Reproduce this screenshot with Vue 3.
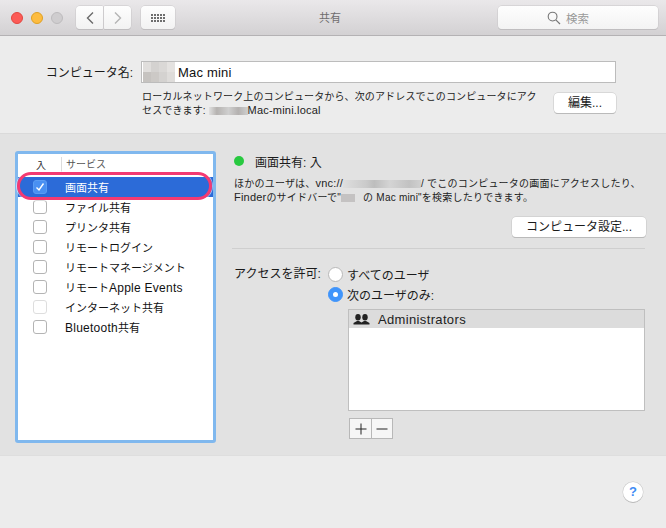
<script setup>
const runs = (name) =>
  name.split(/([A-Za-z ]+)/).filter(Boolean).map((text) => ({ text, latin: /^[A-Za-z ]/.test(text) }))
const services = [
  { name: '画面共有', on: true, selected: true },
  { name: 'ファイル共有' },
  { name: 'プリンタ共有' },
  { name: 'リモートログイン' },
  { name: 'リモートマネージメント' },
  { name: 'リモートApple Events' },
  { name: 'インターネット共有', dim: true },
  { name: 'Bluetooth共有' }
].map((s) => ({ ...s, runs: runs(s.name) }))
const nameBlur = ['#e0dedc', '#d4d2d0', '#dad8d6', '#e4e2e0', '#c6c3c0', '#ccc9c6', '#d4d2d0', '#dedcda']
const dots = Array.from({ length: 15 })
</script>

<template>
  <div class="window">
    <header class="titlebar">
      <div class="lights">
        <span class="light red"></span>
        <span class="light yellow"></span>
        <span class="light gray"></span>
      </div>
      <div class="navs">
        <button class="tool back" type="button">
          <svg width="10" height="14" viewBox="0 0 10 14"><path d="M8 1.5 2.5 7 8 12.5" fill="none" stroke="#6a6a6a" stroke-width="1.4" /></svg>
        </button>
        <button class="tool fwd" type="button">
          <svg width="10" height="14" viewBox="0 0 10 14"><path d="M2 1.5 7.5 7 2 12.5" fill="none" stroke="#b4b4b4" stroke-width="1.4" /></svg>
        </button>
      </div>
      <button class="tool grid" type="button">
        <span class="dots"><i v-for="(d, i) in dots" :key="i"></i></span>
      </button>
      <div class="title">共有</div>
      <div class="search">
        <svg width="14" height="14" viewBox="0 0 14 14"><circle cx="5.6" cy="5.6" r="4.4" fill="none" stroke="#777" stroke-width="1.1" /><path d="M8.8 8.8 13 13" stroke="#777" stroke-width="1.2" /></svg>
        <span>検索</span>
      </div>
    </header>

    <section class="top">
      <div class="name-row">
        <label class="name-label">コンピュータ名:</label>
        <div class="name-field">
          <span class="mosaic name-mosaic"><i v-for="(c, i) in nameBlur" :key="i" :style="{ background: c }"></i></span>
          <span>Mac mini</span>
        </div>
      </div>
      <div class="addr-row">
        <p class="addr">ローカルネットワーク上のコンピュータから、次のアドレスでこのコンピュータにアク<br />セスできます: <span class="smudge s-local"></span><span class="wide">Mac-mini.local</span></p>
        <button class="btn edit" type="button">編集...</button>
      </div>
    </section>

    <section class="middle">
      <div class="list">
        <div class="list-head">
          <span class="col-in">入</span>
          <span class="col-svc">サービス</span>
        </div>
        <div
          v-for="s in services"
          :key="s.name"
          class="row"
          :class="{ selected: s.selected }"
        >
          <span class="check" :class="{ on: s.on, dim: s.dim }">
            <svg v-if="s.on" width="10" height="10" viewBox="0 0 10 10"><path d="M1.5 5.5 4 8 8.5 1.5" fill="none" stroke="#fff" stroke-width="1.4" /></svg>
          </span>
          <span class="svc"><span v-for="(r, i) in s.runs" :key="i" :class="{ latin: r.latin }">{{ r.text }}</span></span>
        </div>
        <div class="ring"></div>
      </div>

      <div class="detail">
        <div class="status">
          <span class="led"></span>
          <span>画面共有: 入</span>
        </div>
        <p class="desc">ほかのユーザは、<span class="wide">vnc://</span><span class="smudge s-ip"></span>/ でこのコンピュータの画面にアクセスしたり、<br /><span class="wide">Finder</span>のサイドバーで"<span class="smudge s-nm"></span> の Mac mini"を検索したりできます。</p>
        <div class="settings-row">
          <button class="btn settings" type="button">コンピュータ設定...</button>
        </div>
        <hr class="rule" />
        <div class="access">
          <span class="access-label">アクセスを許可:</span>
          <div class="radios">
            <div class="radio-row"><span class="radio"></span><span>すべてのユーザ</span></div>
            <div class="radio-row"><span class="radio on"></span><span>次のユーザのみ:</span></div>
          </div>
        </div>
        <div class="users">
          <div class="users-box">
            <div class="user-row">
              <svg width="17" height="11" viewBox="0 0 17 11"><g fill="#222"><ellipse cx="5" cy="3.200" rx="2.700" ry="3.200" /><ellipse cx="12" cy="3.200" rx="2.700" ry="3.200" /><path d="M.5 10.500V9L4 7h2l2.500 1.500L11 7h2l3.500 2v1.500Z" /></g></svg>
              <span>Administrators</span>
            </div>
          </div>
          <div class="plusminus">
            <button class="pm" type="button"><svg width="12" height="12" viewBox="0 0 12 12"><path d="M6 .5v11M.5 6h11" stroke="#222" stroke-width="1" /></svg></button>
            <button class="pm" type="button"><svg width="12" height="12" viewBox="0 0 12 12"><path d="M.5 6h11" stroke="#222" stroke-width="1" /></svg></button>
          </div>
        </div>
      </div>
    </section>

    <footer class="bottom">
      <button class="help" type="button">?</button>
    </footer>
  </div>
</template>

<style>
html, body { margin: 0; background: #ececec; }
</style>

<style scoped>
.window {
  width: 666px;
  height: 528px;
  display: flex;
  flex-direction: column;
  overflow: hidden;
  background: #ececec;
  color: #1a1a1a;
  font-family: "Liberation Sans", "Noto Sans CJK JP", sans-serif;
  font-size: 11px;
}
button { font-family: inherit; padding: 0; margin: 0; cursor: default; }
p { margin: 0; }

.titlebar {
  height: 35px;
  flex: none;
  display: flex;
  align-items: center;
  padding: 0 8px 0 11px;
  box-sizing: content-box;
  background: linear-gradient(#eae8ea, #d3d1d3);
  border-bottom: 1px solid #b4b2b4;
  position: relative;
}
.lights { display: flex; gap: 8px; }
.light { width: 12px; height: 12px; border-radius: 50%; box-sizing: border-box; }
.red { background: #fc5b57; border: 1px solid #e2463f; }
.yellow { background: #fdbc40; border: 1px solid #dfa023; }
.gray { background: #cfcdcf; border: 1px solid #bdbbbd; }
.navs { display: flex; gap: 1px; margin-left: 13px; }
.tool {
  height: 23px;
  display: flex;
  align-items: center;
  justify-content: center;
  border: none;
  background: linear-gradient(#fefefe, #f2f2f2);
  box-shadow: 0 0 0 .5px #c8c6c8, 0 1px 0 #b8b6b8;
  border-radius: 4px;
}
.back, .fwd { width: 27px; }
.back { border-radius: 4px 1px 1px 4px; }
.fwd { border-radius: 1px 4px 4px 1px; }
.grid { width: 34px; margin-left: 10px; }
.dots { display: grid; grid-template-columns: repeat(5, 2px); gap: 1px; grid-auto-rows: 2px; }
.dots i { background: #6e6e6e; }
.title {
  position: absolute;
  left: 319px;
  top: 10px;
  font-size: 11px;
  line-height: 16px;
  color: #6f6d6f;
}
.search {
  margin-left: auto;
  width: 160px;
  height: 23px;
  display: flex;
  align-items: center;
  justify-content: center;
  gap: 5px;
  box-sizing: border-box;
  padding-right: 20px;
  font-size: 11.500px;
  color: #9a9a9a;
  border-radius: 4px;
  background: linear-gradient(#fefefe, #f3f3f3);
  box-shadow: 0 0 0 .5px #c8c6c8, 0 1px 0 #b8b6b8;
}

.top {
  flex: none;
  height: 97px;
  box-sizing: border-box;
  padding: 25px 50px 0 0;
}
.name-row { display: flex; align-items: center; }
.name-label { width: 133px; text-align: right; font-size: 12px; line-height: 22px; margin-right: 8px; position: relative; top: 1px; }
.name-field {
  width: 475px;
  height: 22px;
  box-sizing: border-box;
  border: 1px solid #bcbcbc;
  background: #fff;
  display: flex;
  align-items: center;
  font-size: 13px;
  letter-spacing: .2px;
  color: #111;
}
.mosaic { display: grid; }
.name-mosaic {
  grid-template-columns: repeat(4, 8px);
  grid-auto-rows: 10px;
  width: 32px;
  margin: 0 3px 0 1px;
}
.addr-row { display: flex; margin-top: 7px; }
.addr {
  margin-left: 142px;
  width: 412px;
  font-size: 10px;
  line-height: 14px;
  letter-spacing: .13px;
  white-space: nowrap;
  color: #222;
}
.wide { font-size: 11px; line-height: 10px; letter-spacing: .2px; }
.smudge { display: inline-block; height: 8px; vertical-align: -1px; }
.s-local { width: 39px; background: linear-gradient(90deg, #e0e0e0, #b5b2b0 20%, #cfcfcf 50%, #b4b1b0 75%, #cfcfcf); }
.btn {
  height: 20px;
  box-sizing: border-box;
  border: none;
  border-radius: 4px;
  background: #fff;
  box-shadow: 0 0 0 .5px #c4c4c4, 0 1px 0 #b0b0b0;
  font-size: 12px;
  line-height: 20px;
  color: #1a1a1a;
}
.edit { width: 62px; margin-top: 3px; }

.middle {
  flex: none;
  height: 323px;
  box-sizing: border-box;
  background: #e2e2e2;
  border-top: 1px solid #dadada;
  border-bottom: 1px solid #dedede;
  padding: 17px 20px 0 15px;
  display: flex;
}
.list {
  width: 201px;
  height: 292px;
  box-sizing: border-box;
  border: 3px solid #80b8ee;
  border-radius: 3px;
  background: #fff;
  position: relative;
}
.list-head {
  height: 20px;
  display: flex;
  align-items: center;
  font-size: 10px;
  color: #555;
}
.col-in { width: 43px; padding-left: 18px; box-sizing: border-box; color: #333; }
.col-svc { border-left: 1px solid #dcdcdc; padding-left: 4px; line-height: 15px; }
.row {
  height: 20px;
  display: flex;
  align-items: center;
  font-size: 11px;
  color: #111;
}
.list-head + .row { margin-top: 3px; }
.selected { background: #2c6bd8; color: #fff; }
.check {
  width: 14px;
  height: 14px;
  margin-left: 15px;
  box-sizing: border-box;
  border: 1px solid #b4b4b4;
  border-radius: 3px;
  background: #fff;
  display: flex;
  align-items: center;
  justify-content: center;
}
.check.on { background: #4a90f2; border-color: #5a9cf4; }
.check.dim { border-color: #dedede; }
.svc { margin-left: 18px; white-space: nowrap; }
.latin { font-size: 12px; letter-spacing: .25px; }
.ring {
  position: absolute;
  left: -1px;
  top: 18px;
  width: 195px;
  height: 28px;
  box-sizing: border-box;
  border: 3px solid #f43a72;
  border-radius: 14px;
  box-shadow: 0 0 0 1px rgba(255, 255, 255, .55);
}

.detail { margin-left: 16px; width: 413px; font-size: 11px; }
.status { display: flex; align-items: center; height: 20px; margin-left: 2px; font-size: 12px; }
.led { width: 10px; height: 10px; border-radius: 50%; background: #28c940; margin-right: 11px; }
.desc {
  margin: 6px 0 0 2px;
  font-size: 10px;
  line-height: 14px;
  letter-spacing: .22px;
  white-space: nowrap;
  color: #222;
}
.s-ip { width: 78px; background: linear-gradient(90deg, #dedede, #cacaca 30%, #bdbdbd 40%, #d4d4d4 60%, #c2c2c2 85%, #d0d0d0); }
.s-nm { width: 14px; margin-right: 5px; background: #c4c2c2; }
.settings-row { display: flex; justify-content: flex-end; margin: 12px -1px 0 0; }
.settings { width: 134px; }
.rule { border: none; border-top: 1px solid #cfcfcf; margin: 11px 0 0 0; }
.access { display: flex; margin-top: 15px; margin-left: 2px; font-size: 12px; }
.access-label { width: 94px; line-height: 20px; white-space: nowrap; }
.radio-row { display: flex; align-items: center; height: 20px; }
.radio {
  width: 15px;
  height: 15px;
  box-sizing: border-box;
  border-radius: 50%;
  border: 1px solid #b8b8b8;
  background: #fff;
  margin-right: 4px;
  display: block;
  position: relative;
}
.radio.on { background: #3f94fb; border-color: #3f94fb; }
.radio.on::after {
  content: "";
  position: absolute;
  left: 4px;
  top: 4px;
  width: 5px;
  height: 5px;
  border-radius: 50%;
  background: #fff;
}
.users { margin-left: 116px; margin-top: 5px; }
.users-box {
  width: 297px;
  height: 102px;
  box-sizing: border-box;
  border: 1px solid #bfbfbf;
  background: #fff;
}
.user-row {
  height: 18px;
  background: #dcdcdc;
  display: flex;
  align-items: center;
  padding-left: 4px;
  font-size: 13px;
  color: #222;
  letter-spacing: .35px;
  gap: 8px;
}
.plusminus { display: flex; margin-top: 7px; margin-left: 1px; }
.pm {
  width: 23px;
  height: 21px;
  border: 1px solid #b8b8b8;
  background: #f6f6f6;
  display: flex;
  align-items: center;
  justify-content: center;
  box-sizing: border-box;
}
.pm + .pm { margin-left: -1px; width: 22px; }

.bottom {
  flex: 1;
  display: flex;
  justify-content: flex-end;
  align-items: flex-start;
  padding: 26px 23px 0 0;
}
.help {
  width: 20px;
  height: 20px;
  border-radius: 50%;
  border: none;
  background: #fff;
  box-shadow: 0 0 0 .5px #c8c8c8, 0 1px 0 #b0b0b0;
  color: #3f8cf5;
  font-size: 13px;
  font-weight: 700;
  line-height: 20px;
  text-align: center;
}
</style>
